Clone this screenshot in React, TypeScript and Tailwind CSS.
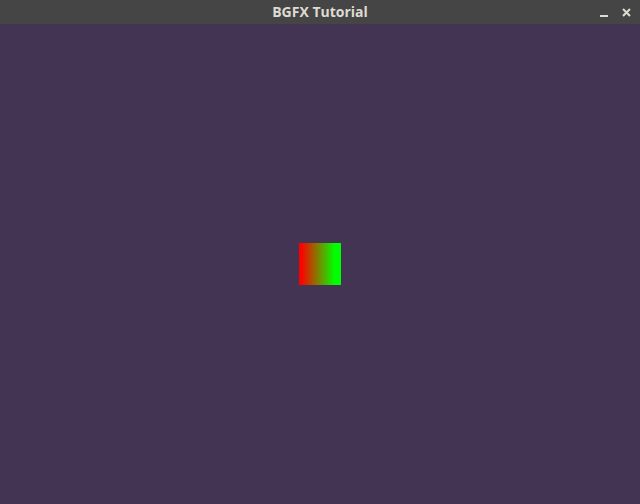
export default function App() {
  return (
    <div className="w-[640px] h-[504px] flex flex-col bg-[#443454]">
      {/* Title bar */}
      <div className="h-6 bg-[#454545] flex items-center relative">
        <div className="flex-1 text-center text-[14px] font-bold text-[#dfdbd2] leading-none [font-family:'Open_Sans',sans-serif]">
          BGFX Tutorial
        </div>
        <div className="absolute right-[9px] top-0 h-6 flex items-center gap-[14px]">
          <div className="w-[8px] h-[2px] bg-[#dfdbd2] mt-[7px]" />
          <svg width="9" height="9" viewBox="0 0 9 9">
            <path d="M1 1 L8 8 M8 1 L1 8" stroke="#dfdbd2" strokeWidth="2" />
          </svg>
        </div>
      </div>
      {/* Render area */}
      <div className="flex-1 flex items-center justify-center">
        <div className="w-[42px] h-[42px] bg-[linear-gradient(to_right,#ff0000_5%,#00ff00_85%)]" />
      </div>
    </div>
  );
}
